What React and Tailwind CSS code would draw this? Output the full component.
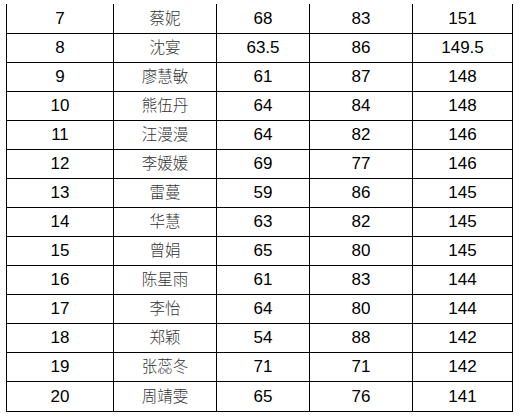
const rows = [
  ["7", "蔡妮", "68", "83", "151"],
  ["8", "沈宴", "63.5", "86", "149.5"],
  ["9", "廖慧敏", "61", "87", "148"],
  ["10", "熊伍丹", "64", "84", "148"],
  ["11", "汪漫漫", "64", "82", "146"],
  ["12", "李媛媛", "69", "77", "146"],
  ["13", "雷蔓", "59", "86", "145"],
  ["14", "华慧", "63", "82", "145"],
  ["15", "曾娟", "65", "80", "145"],
  ["16", "陈星雨", "61", "83", "144"],
  ["17", "李怡", "64", "80", "144"],
  ["18", "郑颖", "54", "88", "142"],
  ["19", "张蕊冬", "71", "71", "142"],
  ["20", "周靖雯", "65", "76", "141"],
];

export default function App() {
  return (
    <div className="w-[520px] h-[418px] bg-white overflow-hidden pt-[4px] pl-[6px]">
      <div
        className="w-[507px] border-l border-r border-b border-black text-black text-[17px]"
        style={{ fontFamily: '"Liberation Sans", Arial, "Noto Sans CJK SC", sans-serif' }}
      >
        {rows.map((r, i) => {
          const last = i === rows.length - 1;
          const h = i === 0 ? "h-[30px] border-b" : last ? "h-[29px]" : "h-[29px] border-b";
          return (
            <div key={i} className={`grid grid-cols-[107px_103px_93px_103px_99px] border-black ${h}`}>
              {r.map((c, j) => (
                <div
                  key={j}
                  className={`flex items-center justify-center border-black ${j < 4 ? "border-r" : ""} ${j === 1 ? "text-[#333] font-light text-[15.5px]" : ""}`}
                >
                  {c}
                </div>
              ))}
            </div>
          );
        })}
      </div>
    </div>
  );
}
